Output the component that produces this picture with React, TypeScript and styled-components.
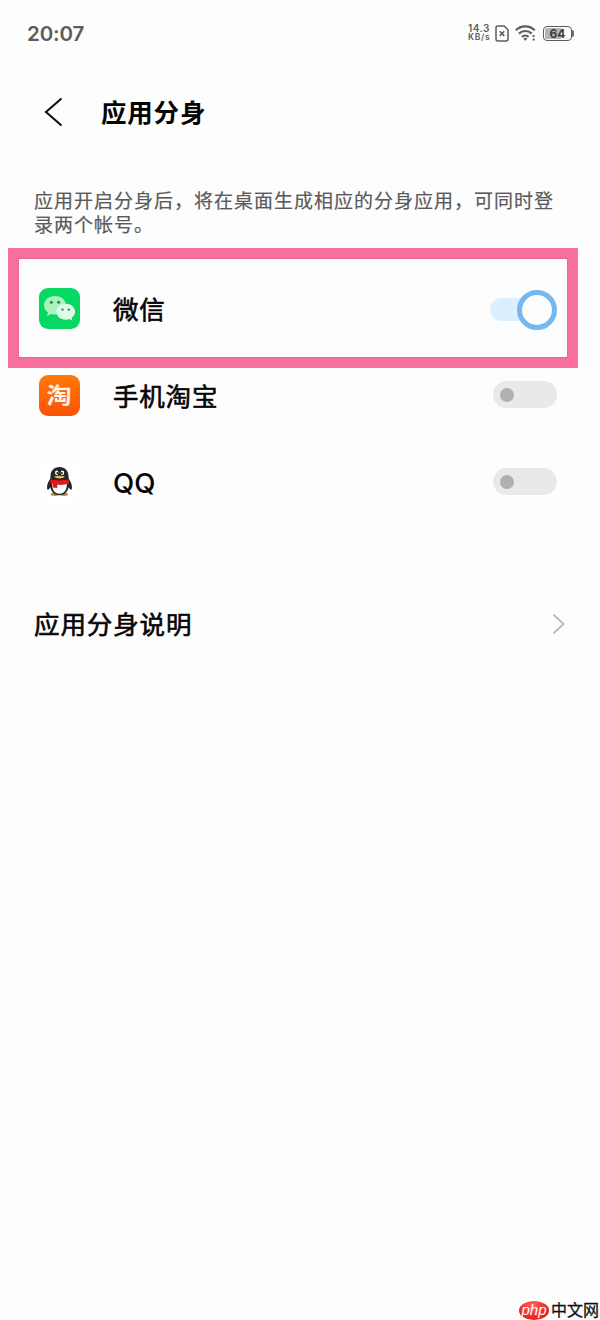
import React from 'react';
import styled, { createGlobalStyle } from 'styled-components';

const GlobalStyle = createGlobalStyle`
  * { box-sizing: border-box; }
  body { margin: 0; background: #fdfdfd; }
`;

const Screen = styled.div`
  display: flex;
  flex-direction: column;
  width: 600px;
  height: 1320px;
  overflow: hidden;
  background: #fdfdfd;
  color: #050505;
  font-family: 'Noto Sans CJK SC', sans-serif;
`;

const StatusBar = styled.div`
  display: flex;
  align-items: center;
  justify-content: space-between;
  height: 68px;
  padding: 0 26px 0 27px;
  color: #5c5c5c;
`;

const Clock = styled.span`
  font: 600 20.5px/24px Inter, sans-serif;
  letter-spacing: -0.1px;
`;

const StatusIcons = styled.div`
  display: flex;
  align-items: center;
  padding-bottom: 2px;
`;

const NetSpeed = styled.div`
  display: flex;
  flex-direction: column;
  width: 27px;
  font: 600 10px/9px Inter, sans-serif;
  letter-spacing: 0.5px;
`;

const SpeedUnit = styled.span`
  font-size: 8.5px;
  letter-spacing: 0.7px;
`;

const Battery = styled.div`
  display: flex;
  align-items: center;
  margin-left: 6px;
`;

const BatteryBody = styled.div`
  width: 29px;
  height: 15px;
  border: 1.5px solid #5c5c5c;
  border-radius: 4px;
  background: linear-gradient(to right, #b4b4b4 64%, transparent 64%);
  background-clip: content-box;
  padding: 1px;
  font: 700 12px/11px Inter, sans-serif;
  color: #3c3c3c;
  text-align: center;
`;

const BatteryTip = styled.div`
  width: 2px;
  height: 7px;
  border-radius: 0 2px 2px 0;
  background: #6c6c6c;
`;

const Header = styled.header`
  display: flex;
  align-items: center;
  height: 88px;
  padding-left: 44px;
`;

const Title = styled.h1`
  margin: 0 0 0 38px;
  padding-bottom: 2px;
  font-size: 25.5px;
  line-height: 36px;
  font-weight: 700;
  letter-spacing: 0.8px;
`;

const Description = styled.p`
  margin: 32px 0 0;
  padding-left: 34px;
  color: #5a5a5a;
  font-size: 19px;
  line-height: 24px;
  letter-spacing: 1px;
  font-weight: 400;
  -webkit-text-stroke: 0.2px #5a5a5a;
  white-space: nowrap;
`;

const AppList = styled.div`
  display: flex;
  flex-direction: column;
  margin-top: 29px;
`;

const Row = styled.div`
  position: relative;
  display: flex;
  align-items: center;
  height: 87px;
  padding: 0 43px 0 39px;
`;

const Highlight = styled.div`
  position: absolute;
  left: 8px;
  top: -17px;
  width: 570px;
  height: 120px;
  border: solid #f96f9c;
  border-width: 11px;
  &::after {
    content: '';
    display: block;
    height: 100%;
    box-shadow: 0 0 0 1px #ec6894;
    border-radius: 1px;
  }
`;

const AppIcon = styled.div<{ $bg: string }>`
  display: flex;
  align-items: center;
  justify-content: center;
  width: 41px;
  height: 41px;
  border-radius: 9px;
  background: ${(p) => p.$bg};
`;

const TaoGlyph = styled.span`
  color: #fff2e2;
  font-size: 22px;
  line-height: 37px;
  height: 41px;
  font-weight: 700;
  transform: scaleX(1.14);
`;

const Label = styled.span`
  flex: 1;
  margin-left: 33px;
  padding-bottom: 2px;
  font-size: 25.5px;
  line-height: 36px;
  font-weight: 400;
  letter-spacing: 0.8px;
  -webkit-text-stroke: 0.6px #050505;
`;

const LatinLabel = styled(Label)`
  padding-bottom: 0;
  font-family: Inter, sans-serif;
  font-size: 27.5px;
  font-weight: 500;
  letter-spacing: 0;
  -webkit-text-stroke: 0.1px #050505;
`;

const Switch = styled.div<{ $on?: boolean }>`
  display: flex;
  align-items: center;
  justify-content: ${(p) => (p.$on ? 'flex-end' : 'flex-start')};
  width: ${(p) => (p.$on ? 67 : 64)}px;
  height: ${(p) => (p.$on ? 23 : 27)}px;
  margin: ${(p) => (p.$on ? '2px 0 0' : '0 0 2px')};
  padding-left: ${(p) => (p.$on ? 0 : 7)}px;
  border-radius: 14px;
  background: ${(p) => (p.$on ? '#dcefff' : '#e9e9e9')};
`;

const Knob = styled.div<{ $on?: boolean }>`
  flex: none;
  width: ${(p) => (p.$on ? 40 : 14)}px;
  height: ${(p) => (p.$on ? 40 : 14)}px;
  border: ${(p) => (p.$on ? '5px solid #75b8ee' : '0')};
  border-radius: 50%;
  background: ${(p) => (p.$on ? '#fdfdfd' : '#b0b0b0')};
`;

const InfoRow = styled(Row)`
  margin-top: 54px;
  padding: 0 35px 0 34px;
`;

const InfoLabel = styled(Label)`
  margin-left: 0;
  letter-spacing: 0.9px;
`;

const Watermark = styled.footer`
  display: flex;
  align-items: center;
  justify-content: flex-end;
  gap: 2px;
  height: 20px;
  margin-top: auto;
`;

const PhpBadge = styled.span`
  width: 30px;
  height: 19px;
  border-radius: 50%;
  background: radial-gradient(ellipse at 45% 25%, #ff6655, #ec2222 65%, #d81414);
  color: #fff;
  font: italic 400 15px/17px 'Liberation Sans', sans-serif;
  text-align: center;
`;

const SiteName = styled.span`
  padding: 0 1px 2px 0;
  font-size: 16px;
  line-height: 20px;
  font-weight: 400;
  -webkit-text-stroke: 0.3px #111;
  color: #111;
`;

const SimIcon = () => (
  <svg width="14" height="17" viewBox="0 0 14 17" fill="none" stroke="#5c5c5c" strokeWidth="1.5">
    <path d="M3 1h6.200L13 4.800V14a2 2 0 0 1-2 2H3a2 2 0 0 1-2-2V3a2 2 0 0 1 2-2Z" />
    <path d="m4.700 6.300 4.600 4.600m0-4.600-4.600 4.600" />
  </svg>
);

const WifiIcon = () => (
  <svg width="22" height="18" viewBox="0 0 22 18" fill="none" stroke="#5c5c5c" style={{ marginLeft: 6 }}>
    <path d="M.8 6.200a13.500 13.500 0 0 1 19 0M3.900 9.600a9.200 9.200 0 0 1 12.800 0M7 12.900a5 5 0 0 1 6.600 0" strokeWidth="2.200" />
    <path d="m8.400 14.800 1.900 2 1.900-2a2.700 2.700 0 0 0-3.800 0Z" fill="#5c5c5c" stroke="none" />
    <path d="M18.600 11v2m0 1.500v2" strokeWidth="2" />
  </svg>
);

const BackIcon = () => (
  <svg width="19" height="30" viewBox="0 0 19 30" fill="none" stroke="#111" strokeWidth="2.1">
    <path d="M17.500 1.500 2 15l15.500 13.500" />
  </svg>
);

const ChevronIcon = () => (
  <svg width="13" height="22" viewBox="0 0 13 22" fill="none" stroke="#bdbdbd" strokeWidth="1.9">
    <path d="m1.500 1.500 10 9.500-10 9.500" />
  </svg>
);

const WeChatIcon = () => (
  <svg width="41" height="41" viewBox="0 0 41 41">
    <path d="M16 8C9.700 8 5 12.200 5 17.300c0 3 1.600 5.600 4.100 7.300L8 28l4-2c1.300.4 2.600.6 4 .6 6.300 0 11-4.200 11-9.300S22.300 8 16 8Z" fill="#a7f4bf" />
    <path d="M26.700 15.800c-5.200 0-9.400 3.500-9.400 7.900s4.200 8 9.400 8c1.200 0 2.400-.2 3.400-.6l3.400 1.700-1-3c2.200-1.500 3.600-3.600 3.600-6.100 0-4.400-4.200-7.900-9.400-7.900Z" fill="#dffce7" />
    <g fill="#218d4b">
      <circle cx="12.400" cy="14.300" r="1.500" />
      <circle cx="19.600" cy="14.300" r="1.500" />
      <circle cx="23.500" cy="21.600" r="1.200" />
      <circle cx="29.800" cy="21.600" r="1.200" />
    </g>
  </svg>
);

const QQIcon = () => (
  <svg width="41" height="41" viewBox="0 0 41 41">
    <ellipse cx="15.800" cy="32.300" rx="4" ry="1.700" fill="#b98a3a" />
    <ellipse cx="25" cy="32.300" rx="4" ry="1.700" fill="#b98a3a" />
    <path d="M20.500 5c-5.700 0-9 4-9 9.300 0 1.500-.3 2.500-1.200 4-1.600 2.800-2.700 5.700-2.100 8.600.3 1.500 1.900.6 3.200-1.600C12.300 30 15.600 33.200 20.500 33.200S28.700 30 29.600 25.300c1.300 2.200 2.900 3.100 3.200 1.600.6-2.900-.5-5.800-2.100-8.600-.9-1.500-1.200-2.500-1.200-4C29.500 9 26.200 5 20.500 5Z" fill="#20262a" />
    <path d="M13.300 20c-.8 6.500 1.500 11.800 7.200 11.800S28.500 26.500 27.700 20c-3.700 2-10.700 2-14.400 0Z" fill="#fff" />
    <ellipse cx="17.700" cy="10.800" rx="1.700" ry="2.300" fill="#fff" />
    <ellipse cx="23.400" cy="10.800" rx="1.700" ry="2.300" fill="#fff" />
    <circle cx="18.300" cy="11" r=".9" fill="#111" />
    <circle cx="22.900" cy="11" r=".9" fill="#111" />
    <path d="M15 14.800c3-1.400 8-1.400 11 0-2.500 2.200-8.500 2.200-11 0Z" fill="#f3b643" />
    <path d="M11.600 17.300c5 1.500 12.800 1.500 17.800 0l.5 4.300c-3.300 1.300-7.500 1.500-11.600 1.200v3.200l-4.600-.6v-3.400l-2.600-1.100Z" fill="#e5171c" />
  </svg>
);

export default function App() {
  return (
    <>
      <GlobalStyle />
      <Screen>
        <StatusBar>
          <Clock>20:07</Clock>
          <StatusIcons>
            <NetSpeed>
              <span>14.3</span>
              <SpeedUnit>KB/s</SpeedUnit>
            </NetSpeed>
            <SimIcon />
            <WifiIcon />
            <Battery>
              <BatteryBody>64</BatteryBody>
              <BatteryTip />
            </Battery>
          </StatusIcons>
        </StatusBar>
        <Header>
          <BackIcon />
          <Title>应用分身</Title>
        </Header>
        <Description>
          应用开启分身后，将在桌面生成相应的分身应用，可同时登
          <br />
          录两个帐号。
        </Description>
        <AppList>
          <Row>
            <Highlight />
            <AppIcon $bg="#07d863">
              <WeChatIcon />
            </AppIcon>
            <Label>微信</Label>
            <Switch $on>
              <Knob $on />
            </Switch>
          </Row>
          <Row>
            <AppIcon $bg="linear-gradient(#ff7a0a, #fb5208)">
              <TaoGlyph>淘</TaoGlyph>
            </AppIcon>
            <Label>手机淘宝</Label>
            <Switch>
              <Knob />
            </Switch>
          </Row>
          <Row>
            <AppIcon $bg="#fff">
              <QQIcon />
            </AppIcon>
            <LatinLabel>QQ</LatinLabel>
            <Switch>
              <Knob />
            </Switch>
          </Row>
        </AppList>
        <InfoRow>
          <InfoLabel>应用分身说明</InfoLabel>
          <ChevronIcon />
        </InfoRow>
        <Watermark>
          <PhpBadge>php</PhpBadge>
          <SiteName>中文网</SiteName>
        </Watermark>
      </Screen>
    </>
  );
}
